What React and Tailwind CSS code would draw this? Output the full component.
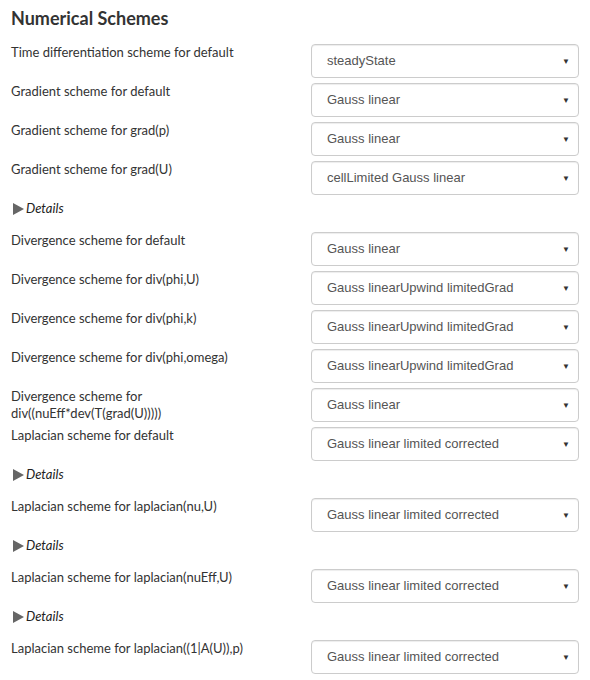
const rows = [
  { label: 'Time differentiation scheme for default', value: 'steadyState' },
  { label: 'Gradient scheme for default', value: 'Gauss linear' },
  { label: 'Gradient scheme for grad(p)', value: 'Gauss linear' },
  { label: 'Gradient scheme for grad(U)', value: 'cellLimited Gauss linear' },
  { details: true },
  { label: 'Divergence scheme for default', value: 'Gauss linear' },
  { label: 'Divergence scheme for div(phi,U)', value: 'Gauss linearUpwind limitedGrad' },
  { label: 'Divergence scheme for div(phi,k)', value: 'Gauss linearUpwind limitedGrad' },
  { label: 'Divergence scheme for div(phi,omega)', value: 'Gauss linearUpwind limitedGrad' },
  { label: 'Divergence scheme for div((nuEff*dev(T(grad(U)))))', value: 'Gauss linear' },
  { label: 'Laplacian scheme for default', value: 'Gauss linear limited corrected' },
  { details: true },
  { label: 'Laplacian scheme for laplacian(nu,U)', value: 'Gauss linear limited corrected' },
  { details: true },
  { label: 'Laplacian scheme for laplacian(nuEff,U)', value: 'Gauss linear limited corrected' },
  { details: true },
  { label: 'Laplacian scheme for laplacian((1|A(U)),p)', value: 'Gauss linear limited corrected' },
];

function Details() {
  return (
    <div className="flex items-center h-[17px] mb-[15px] pl-[13px] text-[13px] leading-[17px] italic text-[#222]">
      <svg width="12" height="12" viewBox="0 0 12 12" className="mr-[1px]">
        <path d="M0 0 L11 6 L0 12 Z" fill="#666" />
      </svg>
      Details
    </div>
  );
}

function Row({ label, value }) {
  return (
    <div className="flex mb-[5px]">
      <div className="w-[311px] h-[34px] pl-[11px] pr-[30px] text-[13px] leading-[17px] text-[#333]">{label}</div>
      <div className="relative w-[268px] h-[34px] rounded-[4px] border border-[#ccc] bg-white shadow-[inset_0_1px_1px_rgba(0,0,0,0.075)] flex items-center pl-[15px] text-[13px] text-[#555] font-['Liberation_Sans',Arial,sans-serif]">
        {value}
        <span className="absolute right-[8px] top-[11px] text-[8px] text-[#333]">▼</span>
      </div>
    </div>
  );
}

export default function App() {
  return (
    <div className="w-[590px] h-[680px] bg-white font-['Lato',sans-serif] overflow-hidden">
      <h2 className="pl-[11px] pt-[7px] pb-[15px] text-[18px] leading-[22px] font-bold text-[#333]">
        Numerical Schemes
      </h2>
      {rows.map((r, i) => (r.details ? <Details key={i} /> : <Row key={i} {...r} />))}
    </div>
  );
}
